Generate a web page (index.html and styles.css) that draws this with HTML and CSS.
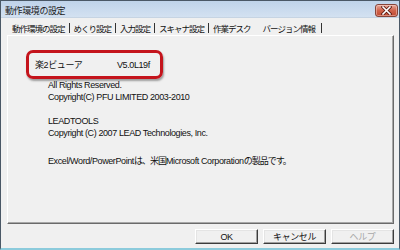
FILE: index.html
```html
<!DOCTYPE html>
<html lang="ja">
  <head>
    <meta charset="UTF-8" />
    <title>動作環境の設定</title>
    <link rel="stylesheet" href="styles.css">
  </head>
  <body>
    <div class="window">
      <div class="titlebar">
        <span class="title">動作環境の設定</span>
        <button class="close" aria-label="閉じる">
          <svg width="11" height="9" viewBox="0 0 11 9">
            <path d="M2 1 L9 8 M9 1 L2 8" stroke="#5a1a12" stroke-width="3.2" stroke-linecap="square" />
            <path d="M2 1 L9 8 M9 1 L2 8" stroke="#fff" stroke-width="1.6" stroke-linecap="square" />
          </svg>
        </button>
      </div>

      <div class="client">
        <!-- flat tab strip -->
        <div class="tabs">
          <span class="tab">動作環境の設定</span>
          <span class="sep"></span>
          <span class="tab">めくり設定</span>
          <span class="sep"></span>
          <span class="tab">入力設定</span>
          <span class="sep"></span>
          <span class="tab">スキャナ設定</span>
          <span class="sep"></span>
          <span class="tab">作業デスク</span>
          <span class="tab active">バージョン情報</span>
          <span class="sep"></span>
        </div>

        <div class="panel">
          <div class="product">
            <span class="product-name">楽2ビューア</span>
            <span>V5.0L19f</span>
          </div>
          <p class="notice">All Rights Reserved.<br />Copyright(C) PFU LIMITED 2003-2010</p>
          <p class="notice gap-sm">LEADTOOLS<br />Copyright (C) 2007 LEAD Technologies, Inc.</p>
          <p class="notice gap-md">Excel/Word/PowerPoint<span class="ja">は、米国</span>Microsoft Corporation<span class="ja">の製品です。</span></p>
        </div>

        <div class="buttons">
          <button class="btn">OK</button>
          <button class="btn">キャンセル</button>
          <button class="btn" disabled>ヘルプ</button>
        </div>
      </div>
    </div>
  </body>
</html>
```

FILE: styles.css
```css
body {
  margin: 0;
  background: #fff;
  font-family: "Liberation Sans", "Noto Sans CJK JP", sans-serif;
  font-size: 9px;
  letter-spacing: -0.4px;
  color: #111;
}

.window {
  width: 400px;
  height: 250px;
  box-sizing: border-box;
  border: 1px solid #4a5866;
  border-bottom: 2px solid #8ccbdc;
  display: flex;
  flex-direction: column;
  background: #f0f0f0;
}

/* Title bar */
.titlebar {
  height: 16px;
  display: flex;
  align-items: center;
  justify-content: space-between;
  padding: 0 1px 0 4px;
  background: linear-gradient(#bfd3ea, #d3e1f1);
  border-bottom: 1px solid #c6d4e3;
}

.title {
  color: #1a1a1a;
  padding-top: 2px;
}

.close {
  width: 23px;
  height: 13px;
  margin-top: 2px;
  padding: 0;
  display: flex;
  align-items: center;
  justify-content: center;
  border: 1px solid #86453a;
  border-radius: 3px;
  background: linear-gradient(#e7aa9c, #d0634c 50%, #c04a32);
  box-shadow: inset 0 0 0 1px rgba(255, 220, 210, 0.45);
}

/* Client area */
.client {
  flex: 1;
  display: flex;
  flex-direction: column;
  padding: 3px 5px 0 6px;
}

.tabs {
  height: 14px;
  display: flex;
  align-items: center;
  padding-left: 5px;
  font-size: 8.5px;
  letter-spacing: -1px;
}

.tab {
  line-height: 14px;
  padding-top: 1px;
}

.tab.active {
  margin-left: 12px;
}

.sep {
  width: 1px;
  height: 10px;
  margin: 0 4px;
  background: #333;
}

.tab.active + .sep {
  margin-left: 6px;
}

/* Tab page */
.panel {
  height: 189px;
  box-sizing: border-box;
  border: 1px solid;
  border-color: #fff #6a6a6a #6a6a6a #fff;
  box-shadow: inset -1px -1px 0 #a8a8a8;
  padding: 14px 0 0 18px;
}

.product {
  width: 137px;
  height: 29px;
  box-sizing: border-box;
  display: flex;
  align-items: center;
  padding-left: 6px;
  border: 3px solid #c4141c;
  border-radius: 7px;
  box-shadow: 1px 2px 2px rgba(0, 0, 0, 0.35);
}

.product-name {
  width: 82px;
}

.notice {
  margin: 0 0 0 22px;
  line-height: 12px;
}

.ja {
  letter-spacing: -1px;
}

.gap-sm {
  margin-top: 12px;
}

.gap-md {
  margin-top: 16px;
}

/* Dialog buttons */
.buttons {
  display: flex;
  justify-content: flex-end;
  gap: 5px;
  margin-top: 5px;
}

.btn {
  width: 63px;
  height: 15px;
  padding: 0;
  font: inherit;
  letter-spacing: inherit;
  color: #111;
  background: #f0f0f0;
  border: 1px solid;
  border-color: #fff #3c3c3c #3c3c3c #fff;
  box-shadow: inset -1px -1px 0 #a0a0a0, inset 1px 1px 0 #e4e4e4;
}

.btn:disabled {
  color: #a8a8a8;
}
```
